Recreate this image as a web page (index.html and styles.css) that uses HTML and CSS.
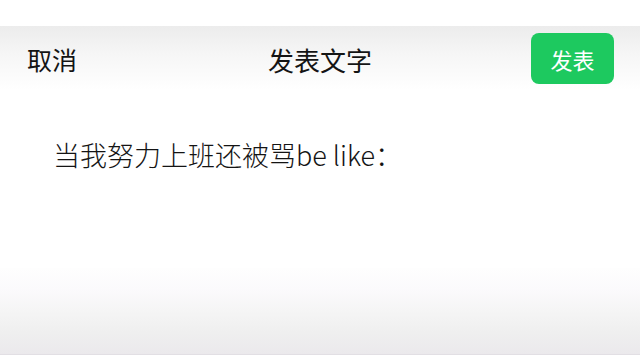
FILE: index.html
```html
<!DOCTYPE html>
<html lang="zh-CN">
  <head>
    <meta charset="UTF-8" />
    <meta name="viewport" content="width=device-width, initial-scale=1.0" />
    <title>发表文字</title>
    <link rel="stylesheet" href="styles.css">
  </head>
  <body>
    <div class="screen">
      <div class="status-gap"></div>
      <div class="nav-bar">
        <span class="nav-cancel">取消</span>
        <span class="nav-title">发表文字</span>
        <button class="nav-post" type="button">发表</button>
      </div>
      <div class="post-body">
        <p class="post-text">当我努力上班还被骂be like：</p>
      </div>
      <div class="bottom-bar"></div>
      <div class="bottom-gap"></div>
    </div>
  </body>
</html>
```

FILE: styles.css
```css
body {
  margin: 0;
  font-family: "Noto Sans CJK SC", "Noto Sans", sans-serif;
  background: #ffffff;
  color: #141414;
}
.screen {
  width: 640px;
  height: 360px;
  display: flex;
  flex-direction: column;
  overflow: hidden;
}
.status-gap {
  height: 26px;
  background: #ffffff;
}
.nav-bar {
  height: 64px;
  display: flex;
  align-items: center;
  justify-content: space-between;
  padding: 0 26px 0 27px;
  position: relative;
  background: linear-gradient(to bottom, #ececec 0%, #f6f6f6 45%, #ffffff 100%);
}
.nav-cancel {
  font-size: 25px;
  line-height: 1;
  margin-top: 2px;
}
.nav-title {
  position: absolute;
  left: 0;
  right: 0;
  text-align: center;
  font-size: 26px;
  font-weight: 400;
  line-height: 1;
  margin-top: 4px;
  pointer-events: none;
}
.nav-post {
  width: 83px;
  height: 51px;
  margin-top: 1px;
  border: none;
  border-radius: 8px;
  background: #1dc95f;
  color: #ffffff;
  font-family: inherit;
  font-size: 22px;
  padding: 0;
}
.post-body {
  flex: 1;
  padding: 51px 0 0 53px;
}
.post-text {
  margin: 0;
  font-size: 27px;
  font-weight: 300;
  line-height: 1;
}
.bottom-bar {
  height: 86px;
  background: linear-gradient(to bottom, #fefefe 0%, #fbfafc 25%, #f5f5f5 50%, #efefef 75%, #ebe9ec 100%);
  border-bottom: 1px solid #e2dfe4;
}
.bottom-gap {
  height: 5px;
  background: #ffffff;
}
```
